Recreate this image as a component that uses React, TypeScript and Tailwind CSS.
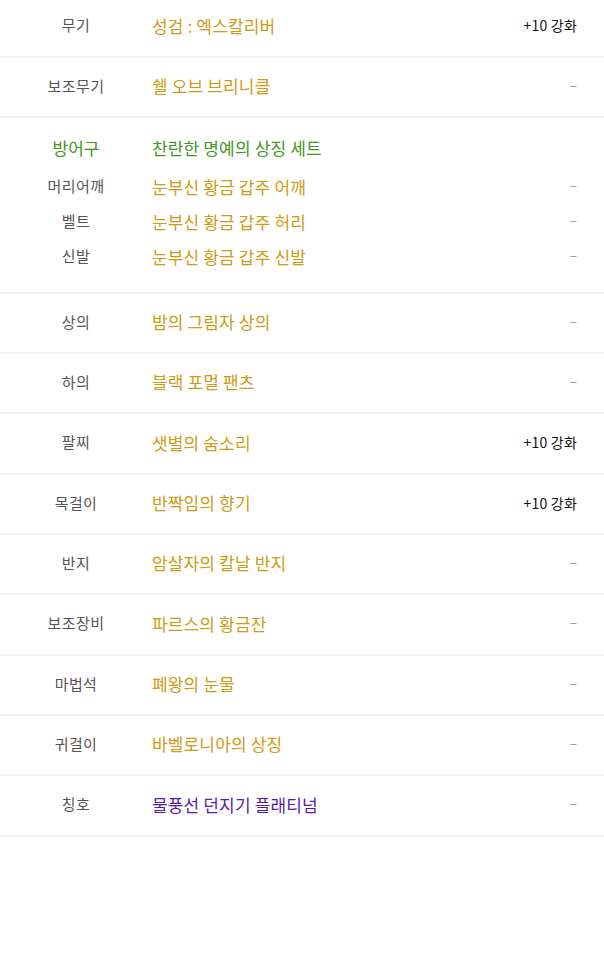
import React from "react";

const GOLD = "text-[#cf9a14]";

type Row = { label: string; name: string; color?: string; right: string };

const rowsTop: Row[] = [
  { label: "무기", name: "성검 : 엑스칼리버", right: "+10 강화" },
  { label: "보조무기", name: "쉘 오브 브리니클", right: "-" },
];

const setItems: Row[] = [
  { label: "머리어깨", name: "눈부신 황금 갑주 어깨", right: "-" },
  { label: "벨트", name: "눈부신 황금 갑주 허리", right: "-" },
  { label: "신발", name: "눈부신 황금 갑주 신발", right: "-" },
];

const rowsBottom: Row[] = [
  { label: "상의", name: "밤의 그림자 상의", right: "-" },
  { label: "하의", name: "블랙 포멀 팬츠", right: "-" },
  { label: "팔찌", name: "샛별의 숨소리", right: "+10 강화" },
  { label: "목걸이", name: "반짝임의 향기", right: "+10 강화" },
  { label: "반지", name: "암살자의 칼날 반지", right: "-" },
  { label: "보조장비", name: "파르스의 황금잔", right: "-" },
  { label: "마법석", name: "폐왕의 눈물", right: "-" },
  { label: "귀걸이", name: "바벨로니아의 상징", right: "-" },
  { label: "칭호", name: "물풍선 던지기 플래티넘", color: "text-[#5b1aa6]", right: "-" },
];

function Right({ v }: { v: string }) {
  if (v === "-") {
    return <span className="relative -top-[2px] text-[14px] text-[#999999]">–</span>;
  }
  return <span className="text-[14px] text-[#111111] tracking-[0.2px]">{v}</span>;
}

function Label({ text }: { text: string }) {
  return (
    <div className="w-[152px] shrink-0 flex justify-center">
      <span className="text-[15px] text-[#555555] tracking-[0.4px]">{text}</span>
    </div>
  );
}

function ItemRow({ r, h }: { r: Row; h: string }) {
  return (
    <div className={`flex items-center border-b-2 border-[#f1f1f1] ${h}`}>
      <Label text={r.label} />
      <div className={`flex-1 text-[17px] tracking-[0.15px] ${r.color ?? GOLD}`}>{r.name}</div>
      <div className="pr-[27px] flex items-center">
        <Right v={r.right} />
      </div>
    </div>
  );
}

export default function App() {
  return (
    <div
      className="w-[604px] h-[960px] bg-white"
      style={{ fontFamily: '"Noto Sans CJK KR", "Noto Sans", sans-serif' }}
    >
      <ItemRow r={rowsTop[0]} h="h-[58px] pb-[5px]" />
      <ItemRow r={rowsTop[1]} h="h-[60px] pb-[2px]" />
      <div className="h-[176px] border-b-2 border-[#f1f1f1] pt-[9px]">
        <div className="flex items-center h-[42px]">
          <div className="w-[152px] shrink-0 flex justify-center">
            <span className="text-[17px] text-[#3f9622]">방어구</span>
          </div>
          <div className="flex-1 text-[17px] tracking-[0.15px] text-[#3f9622]">찬란한 명예의 상징 세트</div>
        </div>
        {setItems.map((r) => (
          <div key={r.label} className="flex items-center h-[35px]">
            <Label text={r.label} />
            <div className={`flex-1 text-[17px] tracking-[0.15px] ${GOLD}`}>{r.name}</div>
            <div className="pr-[27px] flex items-center">
              <Right v={r.right} />
            </div>
          </div>
        ))}
      </div>
      {rowsBottom.map((r, i) => (
        <ItemRow key={r.label} r={r} h={i % 3 === 2 ? "h-[61px] pb-[2px]" : "h-[60px] pb-[2px]"} />
      ))}
    </div>
  );
}
